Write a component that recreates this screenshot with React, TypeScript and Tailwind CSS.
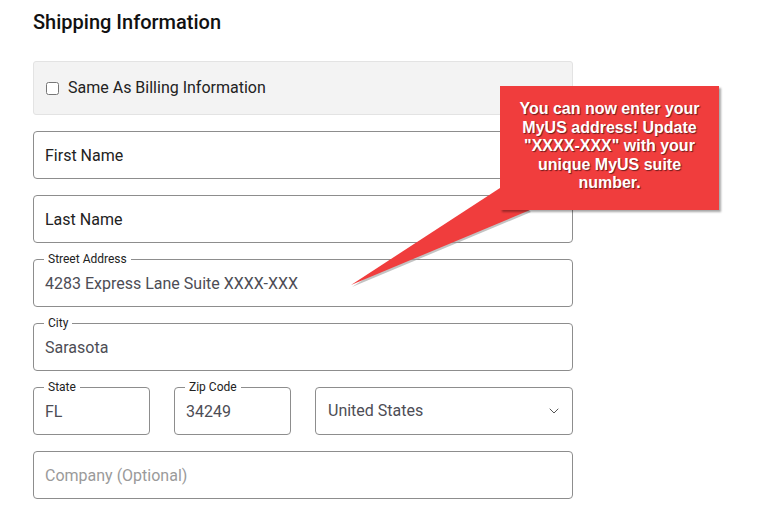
import { ChevronDown } from "lucide-react"

function TextBox({ text, muted = false }: { text: string; muted?: boolean }) {
  return (
    <div className="flex h-[48px] items-center rounded-[4px] border border-[#8d8d8d] px-[11px]">
      <span className={muted ? "pt-[1px] text-[16px] text-[#9a9a9a]" : "pt-[1px] text-[16px] text-[#222]"}>{text}</span>
    </div>
  )
}

function LabeledBox({ label, value, className = "" }: { label: string; value: string; className?: string }) {
  return (
    <div className={"relative flex h-[48px] items-center rounded-[4px] border border-[#8d8d8d] px-[11px] " + className}>
      {/* label sits on the top border */}
      <span className="absolute -top-[9px] left-[10px] bg-white px-[4px] text-[12px] leading-[16px] text-[#222]">
        {label}
      </span>
      <span className="pt-[1px] text-[16px] text-[#4d4d55]">{value}</span>
    </div>
  )
}

function Callout() {
  return (
    <>
      <svg className="absolute left-[340px] top-[180px]" width="200" height="112" viewBox="0 0 200 112">
        <polygon points="161,10 191,32 12,107" fill="#9b9b9b" opacity="0.6" />
        <polygon points="160,8 190,30 11,105" fill="#f03d3d" />
      </svg>
      <div className="absolute left-[500px] top-[86px] flex h-[124px] w-[219px] justify-center bg-[#f03d3d] pt-[14px] shadow-[2px_2px_2px_rgba(0,0,0,0.35)]">
        <p className="text-center font-['Liberation_Sans',Arial,sans-serif] text-[16px] font-bold leading-[18.5px] text-white [text-shadow:1px_1px_1px_rgba(0,0,0,0.55)]">
          You can now enter your
          <br />
          MyUS address! Update
          <br />
          "XXXX-XXX" with your
          <br />
          unique MyUS suite
          <br />
          number.
        </p>
      </div>
    </>
  )
}

export default function App() {
  return (
    <div className="relative h-[515px] w-[775px] overflow-hidden bg-white font-['Roboto','Noto_Sans',sans-serif]">
      <div className="w-[573px] pl-[33px] pt-[10px]">
        <h2 className="text-[20px] font-medium leading-[24px] text-[#111]">Shipping Information</h2>

        <div className="mt-[27px] flex h-[54px] items-center gap-[9px] rounded-[3px] border border-[#e3e3e3] bg-[#f3f3f3] pl-[12px]">
          <input type="checkbox" className="m-0 h-[13px] w-[13px]" />
          <span className="text-[16px] text-[#222]">Same As Billing Information</span>
        </div>

        <div className="mt-[16px] flex flex-col gap-[16px]">
          <TextBox text="First Name" />
          <TextBox text="Last Name" />
          <LabeledBox label="Street Address" value="4283 Express Lane Suite XXXX-XXX" />
          <LabeledBox label="City" value="Sarasota" />
          <div className="flex gap-[24px]">
            <LabeledBox label="State" value="FL" className="w-[117px]" />
            <LabeledBox label="Zip Code" value="34249" className="w-[117px]" />
            <div className="flex h-[48px] flex-1 items-center justify-between rounded-[4px] border border-[#8d8d8d] pl-[12px] pr-[10px]">
              <span className="text-[16px] text-[#4d4d55]">United States</span>
              <ChevronDown className="h-[16px] w-[16px] text-[#555]" strokeWidth={1.5} />
            </div>
          </div>
          <TextBox text="Company (Optional)" muted />
        </div>
      </div>
      <Callout />
    </div>
  )
}
